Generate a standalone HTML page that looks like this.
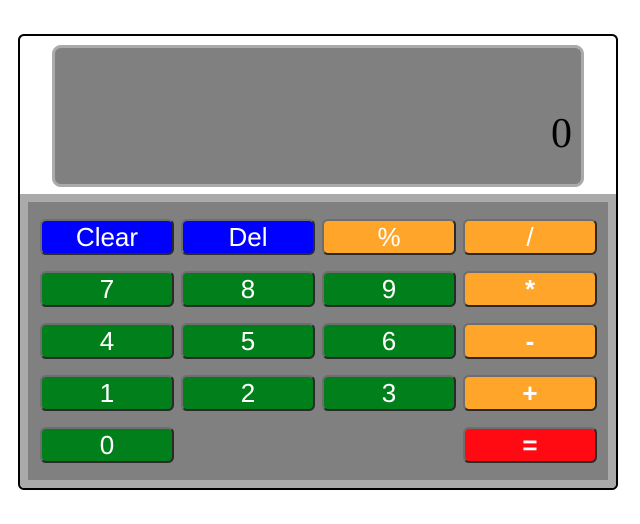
<!DOCTYPE html>
<html><head><style>
body{margin:0;width:640px;height:524px;background:#fff;position:relative;font-family:"Liberation Sans",sans-serif}
.calc{position:absolute;left:18px;top:34px;width:596px;height:452px;border:2px solid #000;border-radius:6px;background:#fff;overflow:hidden}
.disp{position:absolute;left:32px;top:9px;width:526px;height:136px;border:3px solid #aaa;border-radius:9px;background:#808080}
.disp span{position:absolute;right:9px;top:62px;font-family:"Liberation Serif",serif;font-size:42px;line-height:48px;color:#000}
.pad{position:absolute;left:0;top:158px;width:596px;height:294px;background:#aaa}
.inner{position:absolute;left:8px;top:8px;width:580px;height:278px;background:#808080}
.b{position:absolute;width:130px;height:32px;border:2px solid;border-color:#6e6e6e #2a2a2a #2a2a2a #6e6e6e;border-radius:6px;color:#fff;font-size:26px;line-height:32px;text-align:center}
.bl{background:#0000ff}.g{background:#007f1a}.o{background:#ffa62a}.r{background:#ff0a12}
</style></head><body>
<div class="calc">
<div class="disp"><span>0</span></div>
<div class="pad"><div class="inner"></div></div>
</div>
<div class="b bl" style="left:40px;top:219px">Clear</div>
<div class="b bl" style="left:181px;top:219px">Del</div>
<div class="b o" style="left:322px;top:219px">%</div>
<div class="b o" style="left:463px;top:219px">/</div>
<div class="b g" style="left:40px;top:271px">7</div>
<div class="b g" style="left:181px;top:271px">8</div>
<div class="b g" style="left:322px;top:271px">9</div>
<div class="b o" style="left:463px;top:271px;font-weight:bold">*</div>
<div class="b g" style="left:40px;top:323px">4</div>
<div class="b g" style="left:181px;top:323px">5</div>
<div class="b g" style="left:322px;top:323px">6</div>
<div class="b o" style="left:463px;top:323px;font-weight:bold">-</div>
<div class="b g" style="left:40px;top:375px">1</div>
<div class="b g" style="left:181px;top:375px">2</div>
<div class="b g" style="left:322px;top:375px">3</div>
<div class="b o" style="left:463px;top:375px;font-weight:bold">+</div>
<div class="b g" style="left:40px;top:427px">0</div>
<div class="b r" style="left:463px;top:427px;font-weight:bold">=</div>
</body></html>
